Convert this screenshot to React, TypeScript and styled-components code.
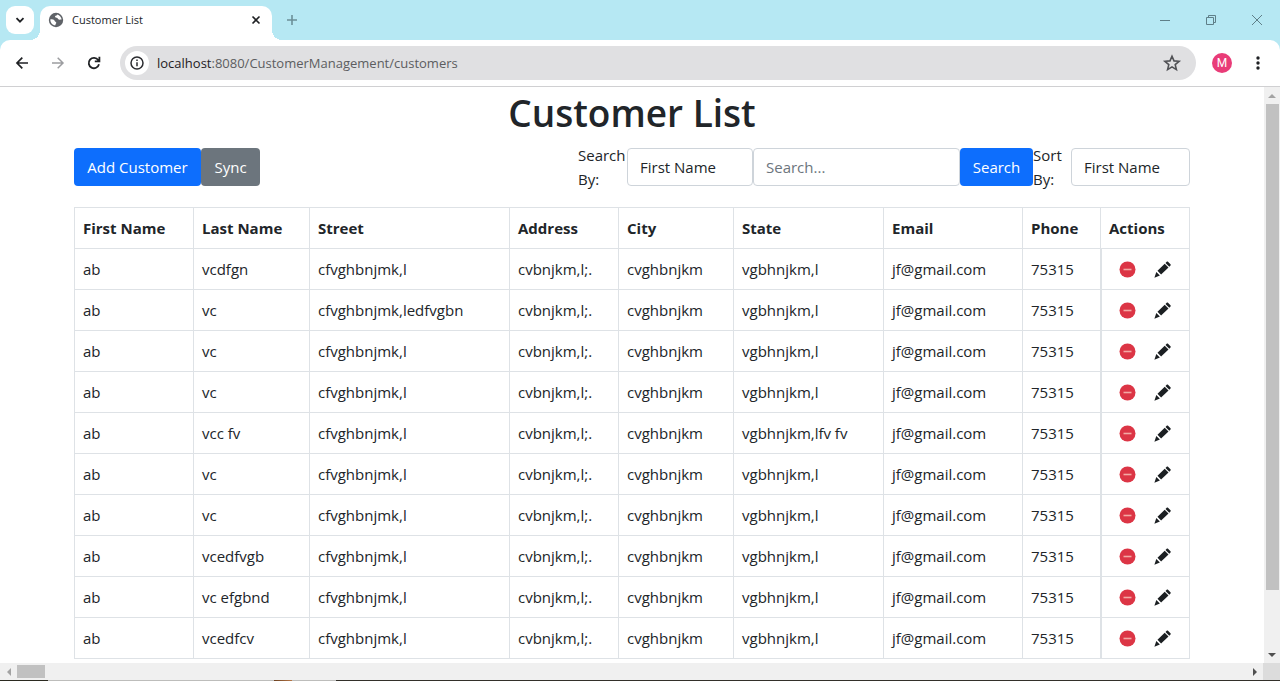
import React from "react";
import styled, { createGlobalStyle } from "styled-components";

const Global = createGlobalStyle`
  *, *::before, *::after { box-sizing: border-box; }
  body {
    margin: 0;
    font-family: "Open Sans", "Noto Sans", sans-serif;
    font-size: 15px;
    line-height: 24px;
    color: #212529;
    background: #fff;
    overflow: hidden;
  }
  button, input, select { font: inherit; margin: 0; }
`;

const Window = styled.div`
  height: 100vh;
  display: flex;
  flex-direction: column;
`;

/* Browser frame */
const TabStrip = styled.header`
  flex: none;
  height: 40px;
  display: flex;
  align-items: flex-end;
  background: #b6e8f3;
  padding-left: 6px;
`;

const PlainButton = styled.button`
  border: 0;
  padding: 0;
  background: none;
  color: inherit;
  display: flex;
  align-items: center;
  justify-content: center;
`;

const TabSearch = styled(PlainButton)`
  width: 28px;
  height: 28px;
  margin-bottom: 6px;
  border-radius: 9px;
  background: #fff;
`;

const Tab = styled.div`
  position: relative;
  width: 232px;
  height: 34px;
  margin-left: 6px;
  padding: 0 8px 6px;
  display: flex;
  align-items: center;
  background: #fff;
  border-radius: 10px 10px 0 0;
  &::before, &::after {
    content: "";
    position: absolute;
    bottom: 0;
    width: 10px;
    height: 10px;
  }
  &::before {
    left: -10px;
    background: radial-gradient(circle at 0 0, transparent 10px, #fff 10px);
  }
  &::after {
    right: -10px;
    background: radial-gradient(circle at 100% 0, transparent 10px, #fff 10px);
  }
`;

const TabTitle = styled.span`
  flex: 1;
  margin-left: 8px;
  font-size: 11px;
  line-height: 16px;
`;

const StripButton = styled(PlainButton)`
  width: 20px;
  height: 28px;
  margin: 0 0 6px 10px;
  color: #6c8f98;
`;

const WindowControls = styled.div`
  margin-left: auto;
  display: flex;
  height: 40px;
`;

const ControlButton = styled(PlainButton)`
  width: 46px;
  color: #5f7f88;
`;

const ToolbarBack = styled.div`
  flex: none;
  background: #b6e8f3;
`;

const Toolbar = styled.div`
  height: 47px;
  display: flex;
  align-items: center;
  padding: 0 10px 0 4px;
  background: #fff;
  border-radius: 10px 10px 0 0;
  border-bottom: 1px solid #d0d0d2;
`;

const NavButton = styled(PlainButton)<{ $faded?: boolean }>`
  width: 36px;
  height: 34px;
  color: ${(p) => (p.$faded ? "#9c9da0" : "#1f2124")};
`;

const AddressBar = styled.div`
  flex: 1;
  height: 34px;
  margin-left: 8px;
  padding: 0 10px 0 5px;
  display: flex;
  align-items: center;
  background: #e0e0e2;
  border-radius: 17px;
`;

const SiteInfo = styled(PlainButton)`
  width: 24px;
  height: 24px;
  border-radius: 12px;
  background: #fff;
`;

const Url = styled.div`
  flex: 1;
  margin-left: 8px;
  font-size: 13px;
  color: #5c5d60;
  span { color: #1f2124; }
`;

const Avatar = styled(PlainButton)`
  width: 20px;
  height: 20px;
  margin: 0 14px 0 16px;
  border-radius: 10px;
  background: #e93c78;
  color: #fff;
  font-family: Roboto, sans-serif;
  font-size: 12px;
  line-height: 20px;
`;

const MenuButton = styled(PlainButton)`
  width: 24px;
  height: 32px;
`;

/* Page */
const View = styled.div`
  flex: 1;
  min-height: 0;
  display: flex;
`;

const Page = styled.main`
  flex: 1;
  min-width: 0;
  overflow: hidden;
`;

const Container = styled.div`
  max-width: 1140px;
  margin: 0 auto;
  padding: 0 12px;
`;

const Title = styled.h1`
  margin: 0 0 4px;
  font-size: 37px;
  line-height: 52px;
  font-weight: 600;
  text-align: center;
`;

const Actions = styled.div`
  display: flex;
  align-items: center;
  justify-content: space-between;
  margin-bottom: 16px;
`;

const Group = styled.div`
  display: flex;
  align-items: center;
`;

const Button = styled.button<{ $tone?: string; $width: number }>`
  width: ${(p) => p.$width}px;
  height: 38px;
  padding: 0;
  border: 0;
  border-radius: 4px;
  color: #fff;
  background: ${(p) => p.$tone ?? "#0d6efd"};
`;

const FieldLabel = styled.label<{ $width: number }>`
  width: ${(p) => p.$width}px;
`;

const Select = styled.select<{ $width: number }>`
  width: ${(p) => p.$width}px;
  height: 38px;
  padding: 6px 12px;
  appearance: none;
  border: 1px solid #ced4da;
  border-radius: 4px;
  background: #fff;
  color: #212529;
`;

const SearchInput = styled.input`
  width: 207px;
  height: 38px;
  padding: 6px 12px;
  border: 1px solid #ced4da;
  border-radius: 4px;
  color: #212529;
  &::placeholder { color: #6c757d; opacity: 1; }
`;

const Table = styled.table`
  width: 100%;
  table-layout: fixed;
  border-collapse: collapse;
  th, td {
    height: 41px;
    padding: 8px;
    border: 1px solid #dee2e6;
    text-align: left;
    white-space: nowrap;
  }
  th { font-weight: 700; }
`;

const Col = styled.col<{ $width: number }>`
  width: ${(p) => p.$width}px;
`;

const ActionCell = styled.td`
  && {
    padding: 0 17px;
    border-left-width: 2px;
  }
`;

const RowActions = styled.div`
  display: flex;
  align-items: center;
  gap: 18px;
`;

const RemoveButton = styled(PlainButton)`
  color: #dc3545;
`;

const EditButton = styled(PlainButton)`
  color: #1b1f22;
`;

/* Scroll bars */
const VerticalBar = styled.div`
  flex: none;
  width: 16px;
  display: flex;
  flex-direction: column;
  align-items: center;
  background: #f0f0f0;
`;

const HorizontalBar = styled.div`
  flex: none;
  height: 17px;
  display: flex;
  align-items: center;
  background: #f0f0f0;
`;

const Arrow = styled.span`
  flex: none;
  width: 17px;
  height: 17px;
  display: flex;
  align-items: center;
  justify-content: center;
`;

const VerticalThumb = styled.div`
  width: 13px;
  height: 486px;
  margin-bottom: auto;
  background: #c1c1c1;
`;

const HorizontalThumb = styled.div`
  width: 28px;
  height: 13px;
  margin-right: auto;
  background: #c1c1c1;
`;

const Corner = styled.div`
  width: 17px;
  height: 17px;
  background: #dcdcdc;
`;

const Edge = styled.div`
  flex: none;
  height: 1px;
  background: linear-gradient(90deg, #2b2a20 48px, #bdbdbb 48px, #bdbdbb 274px, #6a4020 274px, #b87848 292px, #bdbdbb 292px, #bdbdbb 336px, #33302a 336px);
`;

const ArrowIcon = ({ turn, color }: { turn: number; color: string }) => (
  <svg width="8" height="8" viewBox="0 0 8 8">
    <path d="M0 6 4 2 8 6z" fill={color} transform={`rotate(${turn} 4 4)`} />
  </svg>
);

const RemoveIcon = () => (
  <svg width="17" height="17" viewBox="0 0 17 17">
    <circle cx="8.5" cy="8.5" r="8" fill="currentColor" />
    <path d="M4.5 8.5h8" stroke="#f3a9a4" strokeWidth="1.6" />
  </svg>
);

const EditIcon = () => (
  <svg width="17" height="17" viewBox="0 0 17 17" fill="currentColor">
    <path d="M12.7.7c.4-.4.9-.4 1.3 0l2.500 2.500c.4.4.4.9 0 1.300l-1.200 1.200-3.800-3.800zM10.700 2.700 14.500 6.500 7.100 13.400 3.500 9.800zM2.300 11 5.900 14.600.4 16.800z" />
  </svg>
);

const columns: [string, number][] = [
  ["First Name", 119],
  ["Last Name", 116],
  ["Street", 200],
  ["Address", 109],
  ["City", 115],
  ["State", 150],
  ["Email", 139],
  ["Phone", 78],
  ["Actions", 89],
];

const customer = (last: string, street = "cfvghbnjmk,l", state = "vgbhnjkm,l") => [
  "ab", last, street, "cvbnjkm,l;.", "cvghbnjkm", state, "jf@gmail.com", "75315",
];

const customers = [
  customer("vcdfgn"),
  customer("vc", "cfvghbnjmk,ledfvgbn"),
  customer("vc"),
  customer("vc"),
  customer("vcc fv", undefined, "vgbhnjkm,lfv fv"),
  customer("vc"),
  customer("vc"),
  customer("vcedfvgb"),
  customer("vc efgbnd"),
  customer("vcedfcv"),
];

const fields = columns.slice(0, 8).map(([name]) => name);

export default function App() {
  return (
    <>
      <Global />
      <Window>
        <TabStrip>
          <TabSearch aria-label="Search tabs">
            <svg width="10" height="10" viewBox="0 0 10 10" fill="none" stroke="#1f2124" strokeWidth="1.8">
              <path d="M1.5 3.2 5 6.7l3.5-3.5" />
            </svg>
          </TabSearch>
          <Tab>
            <svg width="16" height="16" viewBox="0 0 16 16">
              <circle cx="8" cy="8" r="7.2" fill="#5f6368" />
              <path d="M2.4 7.2c2 .1 3.9.3 4.3 1.7.3 1 1.4.7 1.6 1.8.1.9-1 1-.9 2.6C4.3 13 2.1 10.4 2.4 7.2zM9.3 2.4c-.2 1.5-1.8.8-2.2 1.9-.4 1 .5 1.4 1.5 1.5 1.4.1 1.2 1.7 2.600 1.900 1 .1 1.600-.3 2.400-.1-.1-2.600-1.900-4.500-4.300-5.200z" fill="#fff" />
            </svg>
            <TabTitle>Customer List</TabTitle>
            <PlainButton aria-label="Close tab">
              <svg width="16" height="16" viewBox="0 0 16 16" stroke="#1f2124" strokeWidth="1.6">
                <path d="m4.5 4.5 7 7m0-7-7 7" />
              </svg>
            </PlainButton>
          </Tab>
          <StripButton aria-label="New tab">
            <svg width="12" height="12" viewBox="0 0 12 12" stroke="currentColor" strokeWidth="1.6">
              <path d="M6 1v10M1 6h10" />
            </svg>
          </StripButton>
          <WindowControls>
            <ControlButton aria-label="Minimize">
              <svg width="10" height="10" viewBox="0 0 10 10" stroke="currentColor">
                <path d="M0 5.5h10" />
              </svg>
            </ControlButton>
            <ControlButton aria-label="Restore">
              <svg width="10" height="10" viewBox="0 0 10 10" fill="none" stroke="currentColor">
                <path d="M.5 2.5h7v7h-7zM2.5 2.5v-2h7v7h-2" />
              </svg>
            </ControlButton>
            <ControlButton aria-label="Close">
              <svg width="10" height="10" viewBox="0 0 10 10" stroke="currentColor">
                <path d="m0 0 10 10M10 0 0 10" />
              </svg>
            </ControlButton>
          </WindowControls>
        </TabStrip>

        <ToolbarBack>
          <Toolbar>
            <NavButton aria-label="Back">
              <svg width="14" height="14" viewBox="0 0 14 14" fill="none" stroke="currentColor" strokeWidth="1.7">
                <path d="M13 7H2m5.3-5.3L2 7l5.3 5.3" />
              </svg>
            </NavButton>
            <NavButton aria-label="Forward" $faded>
              <svg width="14" height="14" viewBox="0 0 14 14" fill="none" stroke="currentColor" strokeWidth="1.5">
                <path d="M1 7h11M6.7 1.7 12 7l-5.3 5.3" />
              </svg>
            </NavButton>
            <NavButton aria-label="Reload">
              <svg width="14" height="14" viewBox="0 0 14 14" fill="none" stroke="currentColor" strokeWidth="1.8">
                <path d="M12 8.3A5.2 5.2 0 1 1 11.2 4L12.2 5M12.4.8v4.6H7.8" />
              </svg>
            </NavButton>
            <AddressBar>
              <SiteInfo aria-label="Site information">
                <svg width="14" height="14" viewBox="0 0 14 14" fill="none" stroke="#2b2c30" strokeWidth="1.5">
                  <circle cx="7" cy="7" r="6" />
                  <path d="M7 6.2v4M7 3.5v1.6" />
                </svg>
              </SiteInfo>
              <Url>
                <span>localhost</span>:8080/CustomerManagement/customers
              </Url>
              <PlainButton aria-label="Bookmark this page">
                <svg width="28" height="18" viewBox="0 0 28 18" fill="none" stroke="#505155" strokeWidth="1.6">
                  <path d="m14 2.2 2 4.7 5.1.4-3.9 3.3 1.2 5-4.4-2.7-4.4 2.7 1.2-5-3.9-3.3 5.1-.4z" />
                </svg>
              </PlainButton>
            </AddressBar>
            <Avatar aria-label="Profile">M</Avatar>
            <MenuButton aria-label="Menu">
              <svg width="4" height="14" viewBox="0 0 4 14" fill="#1f2124">
                <circle cx="2" cy="2" r="1.7" />
                <circle cx="2" cy="7" r="1.7" />
                <circle cx="2" cy="12" r="1.7" />
              </svg>
            </MenuButton>
          </Toolbar>
        </ToolbarBack>

        <View>
          <Page>
            <Container>
              <Title>Customer List</Title>
              <Actions>
                <Group>
                  <Button $width={127}>Add Customer</Button>
                  <Button $width={59} $tone="#6c757d">Sync</Button>
                </Group>
                <Group>
                  <FieldLabel htmlFor="search-by" $width={49}>Search By:</FieldLabel>
                  <Select id="search-by" $width={126}>
                    {fields.map((f) => <option key={f}>{f}</option>)}
                  </Select>
                  <SearchInput aria-label="Search customers" placeholder="Search..." />
                  <Button $width={73}>Search</Button>
                  <FieldLabel htmlFor="sort-by" $width={38}>Sort By:</FieldLabel>
                  <Select id="sort-by" $width={119}>
                    {fields.map((f) => <option key={f}>{f}</option>)}
                  </Select>
                </Group>
              </Actions>
              <Table>
                <colgroup>
                  {columns.map(([name, width]) => <Col key={name} $width={width} />)}
                </colgroup>
                <thead>
                  <tr>
                    {columns.map(([name]) => <th key={name} scope="col">{name}</th>)}
                  </tr>
                </thead>
                <tbody>
                  {customers.map((row, i) => (
                    <tr key={i}>
                      {row.map((value, j) => <td key={j}>{value}</td>)}
                      <ActionCell>
                        <RowActions>
                          <RemoveButton aria-label="Delete customer"><RemoveIcon /></RemoveButton>
                          <EditButton aria-label="Edit customer"><EditIcon /></EditButton>
                        </RowActions>
                      </ActionCell>
                    </tr>
                  ))}
                </tbody>
              </Table>
            </Container>
          </Page>
          <VerticalBar>
            <Arrow><ArrowIcon turn={0} color="#a3a3a3" /></Arrow>
            <VerticalThumb />
            <Arrow><ArrowIcon turn={180} color="#505050" /></Arrow>
          </VerticalBar>
        </View>
        <HorizontalBar>
          <Arrow><ArrowIcon turn={270} color="#a3a3a3" /></Arrow>
          <HorizontalThumb />
          <Arrow><ArrowIcon turn={90} color="#505050" /></Arrow>
          <Corner />
        </HorizontalBar>
        <Edge />
      </Window>
    </>
  );
}
